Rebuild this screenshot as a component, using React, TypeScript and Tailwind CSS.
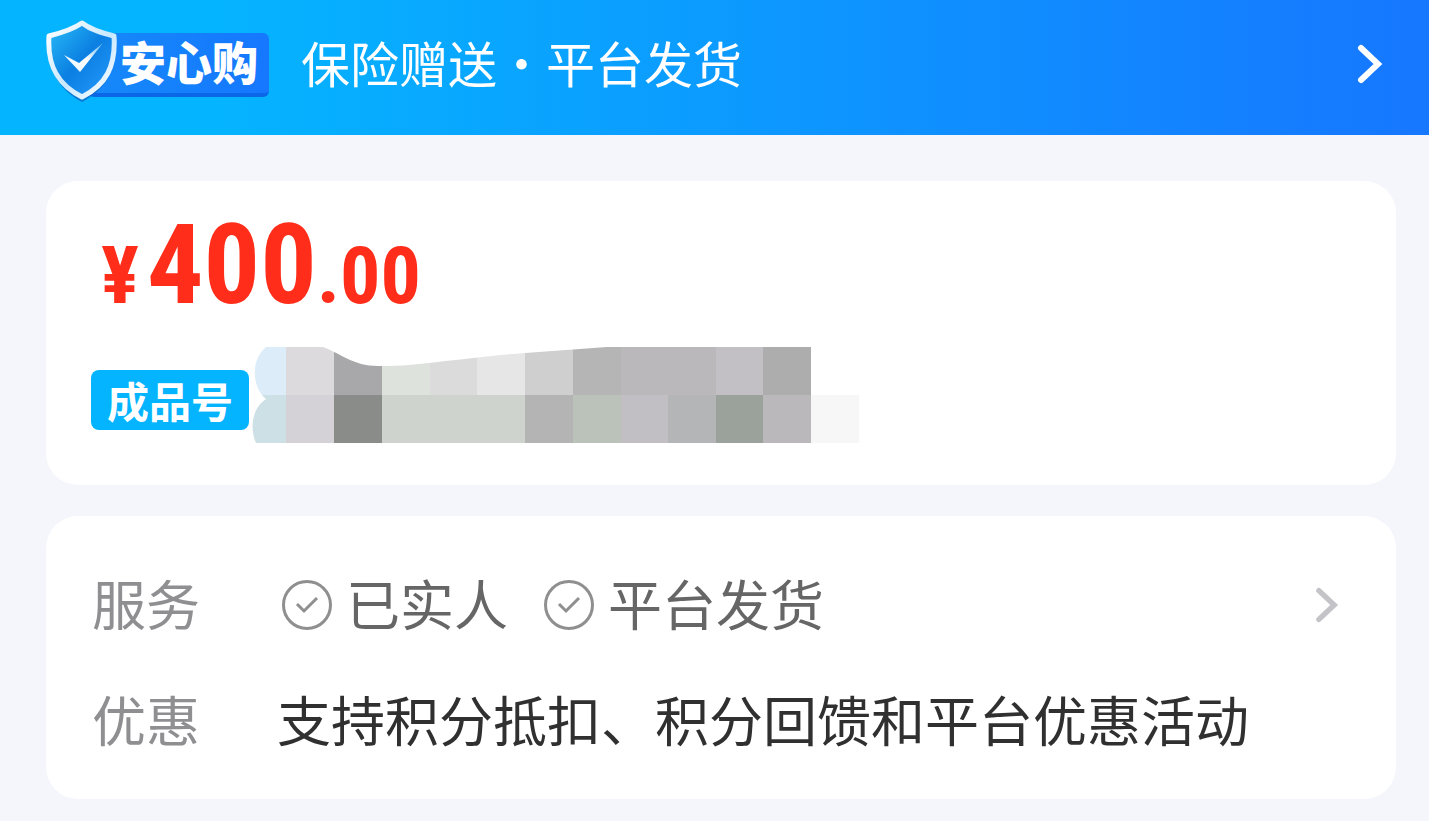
import React from 'react';

const services = ['已实人', '平台发货'];

// x, width, colour of every mosaic block, one list per row
const mosaicRows = [
  [
    [0, 34, '#dcedf9'], [34, 48, '#dcdadd'], [82, 48, '#a8a7a9'], [130, 48, '#dde2dc'],
    [178, 47, '#dcdbdc'], [225, 48, '#e7e6e7'], [273, 48, '#cfcfcf'], [321, 48, '#b4b5b4'],
    [369, 95, '#bab8bb'], [464, 47, '#c3c0c5'], [511, 48, '#adadad'],
  ],
  [
    [0, 34, '#cce0e5'], [34, 48, '#d4d2d6'], [82, 48, '#8a8c8a'], [130, 143, '#ced3cd'],
    [273, 48, '#b4b4b4'], [321, 48, '#bac2ba'], [369, 47, '#c2bfc4'], [416, 48, '#b4b5b6'],
    [464, 47, '#9ba29c'], [511, 48, '#bab8bb'], [559, 48, '#f7f7f7'],
  ],
] as [number, number, string][][];

function ShieldIcon() {
  return (
    <svg viewBox="0 0 76 86" className="relative z-10 h-[86px] w-[76px] shrink-0" aria-hidden="true">
      <defs>
        <linearGradient id="shieldFill" x1="0" y1="0" x2="1" y2="1">
          <stop offset="0" stopColor="#28bdf8" />
          <stop offset="0.5" stopColor="#0b7fe2" />
          <stop offset="1" stopColor="#2a9dff" />
        </linearGradient>
        <linearGradient id="shieldRim" x1="0" y1="0" x2="1" y2="1">
          <stop offset="0" stopColor="#ffffff" />
          <stop offset="0.55" stopColor="#c9e8ff" />
          <stop offset="1" stopColor="#ffffff" />
        </linearGradient>
        <linearGradient id="checkFill" x1="1" y1="0" x2="0" y2="1">
          <stop offset="0" stopColor="#5fb8f8" />
          <stop offset="0.5" stopColor="#ffffff" />
          <stop offset="1" stopColor="#e0f3ff" />
        </linearGradient>
      </defs>
      <path d="M38 6C48 13 58 16 71 19C73 50 63 70 38 83C14 70 3 50 5 20C17 17 28 13 38 6Z" fill="#0866c8" opacity="0.75" />
      <path
        d="M38 4C47 11 58 14 70 17C72 47 62 66 38 78C14 66 3 47 5 17C17 14 28 11 38 4Z"
        fill="url(#shieldFill)"
        stroke="url(#shieldRim)"
        strokeWidth="5"
        strokeLinejoin="round"
      />
      <path d="M20 36L35 44L59 24L36 53Z" fill="url(#checkFill)" />
    </svg>
  );
}

function ChevronIcon({ className }: { className: string }) {
  return (
    <svg
      viewBox="0 0 28 40"
      className={className}
      fill="none"
      stroke="currentColor"
      strokeWidth="6"
      strokeLinecap="round"
      aria-hidden="true"
    >
      <path d="M5 4L22 20L5 36" />
    </svg>
  );
}

function CheckCircleIcon() {
  return (
    <svg viewBox="0 0 50 50" className="mt-1 size-[50px] shrink-0 text-[#8f8f8f]" fill="none" stroke="currentColor" strokeWidth="3" aria-hidden="true">
      <circle cx="25" cy="25" r="23.500" />
      <path d="M15 24L22 31L35 18" />
    </svg>
  );
}

function Mosaic() {
  return (
    <svg viewBox="0 0 607 105" className="h-[105px] w-[607px] shrink-0" aria-hidden="true">
      <defs>
        <clipPath id="mosaicShape">
          <path d="M14 0H71C88 6 101 19 126 19C160 20 215 10 273 6L355 0H559V48H607V96H4C-2 82 -1 62 14 52C-1 39 -1 12 14 0Z" />
        </clipPath>
      </defs>
      <g clipPath="url(#mosaicShape)">
        {mosaicRows.map((row, rowIdx) =>
          row.map(([x, width, fill]) => (
            <rect key={`${rowIdx}-${x}`} x={x} y={rowIdx * 48} width={width} height={48} fill={fill} />
          ))
        )}
      </g>
    </svg>
  );
}

export default function App() {
  return (
    <div className="min-h-screen bg-[#f4f6fb] pb-[22px] font-['Noto_Sans_CJK_SC',sans-serif]">
      <a
        href="#guarantee"
        className="flex h-[135px] items-center bg-linear-to-r/srgb from-[#05b4ff] from-15% to-[#1677ff] pr-[45px] pl-11 text-white"
      >
        <span className="mb-3 flex items-center">
          <ShieldIcon />
          <span className="mt-1.5 -ml-8 flex h-[64px] items-center rounded-md border-b-4 border-[#0b67e8] bg-linear-to-r from-[#1689f8] to-[#1677ff] pr-[11px] pb-1.5 pl-8 text-[46px] leading-[54px] font-black">
            安心购
          </span>
        </span>
        <span className="mb-3 ml-8 text-[49px] leading-[60px] whitespace-nowrap">保险赠送・平台发货</span>
        <ChevronIcon className="mb-2 ml-auto h-10 w-7 shrink-0" />
      </a>

      <main className="flex flex-col gap-[31px] pt-[46px] pr-[33px] pl-[46px]">
        <section className="rounded-[32px] bg-white px-[45px] pt-[34px] pb-[33px]">
          <div className="flex h-[100px] items-baseline pl-[10px] font-['Roboto_Condensed','Liberation_Sans',sans-serif] leading-[100px] font-bold text-[#ff2d19]">
            <span className="text-[80px]">¥</span>
            <span className="ml-2 text-[112px]">400</span>
            <span className="text-[80px]">.00</span>
          </div>
          <div className="mt-8 flex items-center gap-[3px]">
            <span className="rounded-lg bg-[#05b4ff] px-4 text-[42px] leading-[60px] font-bold text-white">成品号</span>
            <Mosaic />
          </div>
        </section>

        <section className="flex flex-col gap-9 rounded-[32px] bg-white pt-[47px] pr-[56px] pb-10 pl-[46px] text-[54px] leading-[80px] whitespace-nowrap">
          <a href="#service" className="flex items-center">
            <span className="w-[190px] shrink-0 text-[#8f8f92]">服务</span>
            <span className="flex items-center gap-9 text-[#666666]">
              {services.map((name) => (
                <span key={name} className="flex items-center gap-[14px]">
                  <CheckCircleIcon />
                  {name}
                </span>
              ))}
            </span>
            <ChevronIcon className="mt-1 ml-auto h-9 w-[26px] shrink-0 text-[#c4c4c8]" />
          </a>
          <div className="flex items-center">
            <span className="w-[185px] shrink-0 text-[#8f8f92]">优惠</span>
            <span className="text-[#303030]">支持积分抵扣、积分回馈和平台优惠活动</span>
          </div>
        </section>
      </main>
    </div>
  );
}
